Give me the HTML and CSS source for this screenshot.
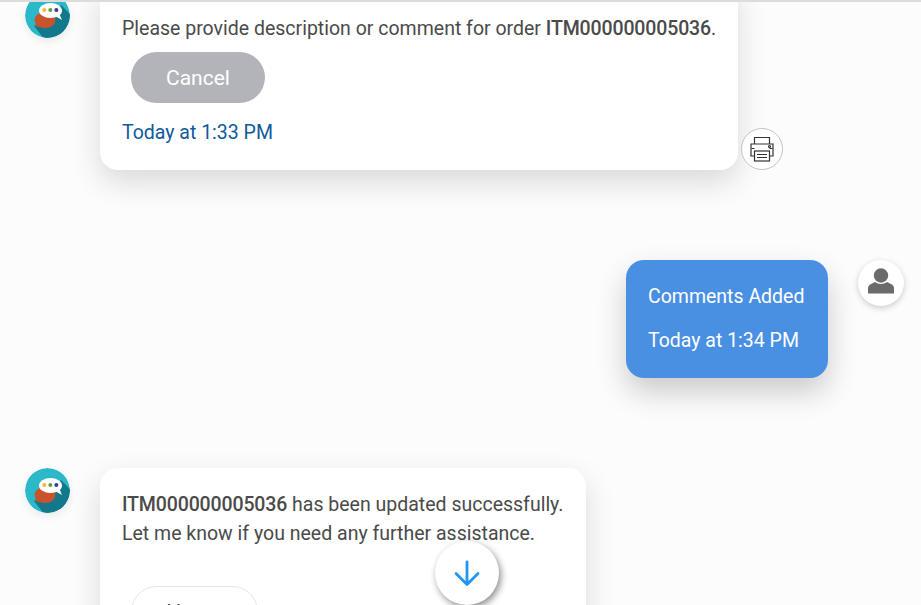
FILE: index.html
```html
<!DOCTYPE html>
<html lang="en">
<head>
<meta charset="utf-8">
<title>Chat</title>
<link rel="stylesheet" href="styles.css">
</head>
<body>
<div class="chat">
  <div class="row bot first">
    <svg class="avatar" viewBox="0 0 45 45"><defs><clipPath id="c1"><circle cx="22.500" cy="22.500" r="22.500"/></clipPath></defs><circle cx="22.500" cy="22.500" r="22.500" fill="#2bb9c9"/><path clip-path="url(#c1)" d="M36 12 L60 36 V60 H30 L9 33Z" fill="#14788c"/><ellipse cx="20" cy="27" rx="10.500" ry="8" fill="#c9532c"/><path d="M13 31 L9 33 L16 34Z" fill="#c9532c"/><ellipse cx="25.500" cy="17.500" rx="11.500" ry="7.500" fill="#fff"/><path d="M30 23 L37 27 L34 20Z" fill="#fff"/><circle cx="19.300" cy="17" r="2" fill="#f5b82e"/><circle cx="25.300" cy="17" r="2" fill="#5f9e3f"/><circle cx="31.300" cy="17" r="2" fill="#2f3f8f"/></svg>
    <div class="bubble white b1">
      <p class="text">Please provide description or comment for order <b>ITM000000005036</b>.</p>
      <button class="cancel">Cancel</button>
      <div class="time">Today at 1:33 PM</div>
    </div>
    <div class="print">
      <svg viewBox="0 0 24 26" width="24" height="26" fill="none" stroke="#333" stroke-width="1.200"><path d="M4.500 8V1.500h15V8"/><path d="M4.500 20H1V8h22v12h-3.500"/><rect x="4.500" y="15" width="15" height="10" fill="#fff"/><path d="M7 18.500h10M7 21.500h10M1.500 12.500h3M19.500 12.500h3"/><circle cx="19.500" cy="10.500" r="1"/></svg>
    </div>
  </div>
  <div class="row user">
    <div class="bubble blue">
      <div>Comments Added</div>
      <div class="usertime">Today at 1:34 PM</div>
    </div>
    <div class="user-avatar">
      <svg viewBox="0 0 26 26" width="26" height="26" fill="#6b6b6b"><circle cx="13" cy="7.500" r="7.200"/><path d="M0 25.500V20c0-2.500 2-3.500 4-4.500l3-1.500c3.500 2.500 8.500 2.500 12 0l3 1.500c2 1 4 2 4 4.500v5.500z"/></svg>
    </div>
  </div>
  <div class="row bot last">
    <svg class="avatar" viewBox="0 0 45 45"><defs><clipPath id="c2"><circle cx="22.500" cy="22.500" r="22.500"/></clipPath></defs><circle cx="22.500" cy="22.500" r="22.500" fill="#2bb9c9"/><path clip-path="url(#c2)" d="M36 12 L60 36 V60 H30 L9 33Z" fill="#14788c"/><ellipse cx="20" cy="27" rx="10.500" ry="8" fill="#c9532c"/><path d="M13 31 L9 33 L16 34Z" fill="#c9532c"/><ellipse cx="25.500" cy="17.500" rx="11.500" ry="7.500" fill="#fff"/><path d="M30 23 L37 27 L34 20Z" fill="#fff"/><circle cx="19.300" cy="17" r="2" fill="#f5b82e"/><circle cx="25.300" cy="17" r="2" fill="#5f9e3f"/><circle cx="31.300" cy="17" r="2" fill="#2f3f8f"/></svg>
    <div class="bubble white b2">
      <p class="text"><b>ITM000000005036</b> has been updated successfully.<br>Let me know if you need any further assistance.</p>
      <button class="option">Home</button>
    </div>
  </div>
</div>
<button class="scroll" aria-label="Scroll down">
  <svg viewBox="0 0 28 28" width="28" height="28" fill="none" stroke="#2196f3" stroke-width="2.800" stroke-linecap="round" stroke-linejoin="round"><path d="M14 3v22M3 14.500 14 25.500 25 14.500"/></svg>
</button>
</body>
</html>
```
FILE: styles.css
```css
html, body { margin: 0; height: 100%; overflow: hidden; }
body { background: #fcfcfc; font-family: Roboto, sans-serif; color: #4a4a4a; position: relative; border-top: 2px solid #dcdcdc; box-sizing: border-box; }
.chat { display: flex; flex-direction: column; margin-top: -22px; }
.row { display: flex; align-items: flex-start; }
.bot { padding-left: 25px; }
.avatar { width: 45px; height: 45px; flex: none; border-radius: 50%; box-shadow: 0 3px 8px rgba(0,0,0,.08); }
.first .avatar { margin-top: 13px; }
.bubble { border-radius: 18px; box-sizing: border-box; font-size: 19.500px; }
.white { background: #fff; margin-left: 30px; box-shadow: 0 12px 30px rgba(0,0,0,.14); }
.b1 { width: 638px; height: 190px; padding: 34px 22px 0; }
.text { margin: 0; line-height: 29px; white-space: nowrap; }
.text b { font-weight: 500; letter-spacing: -0.130px; }
.cancel { display: block; width: 134px; height: 51px; margin: 9px 0 0 9px; border: 0; border-radius: 26px; background: #b3b4ba; color: #fff; font: 21px Roboto, sans-serif; }
.time { margin-top: 15px; color: #0f5a9c; line-height: 29px; }
.print { width: 40px; height: 40px; border: 1px solid #c4c4c4; border-radius: 50%; background: #fff; display: flex; align-items: center; justify-content: center; margin: 148px 0 0 3px; }
.user { justify-content: flex-end; margin-top: 90px; padding-right: 17px; }
.blue { width: 202px; height: 118px; padding: 23px 22px 0; background: #4a90e2; color: #fff; box-shadow: 0 14px 30px rgba(0,0,0,.2); line-height: 28px; white-space: nowrap; }
.usertime { margin-top: 16px; }
.user-avatar { width: 46px; height: 46px; box-sizing: border-box; padding-bottom: 4px; border-radius: 50%; background: #fff; margin-left: 30px; display: flex; align-items: center; justify-content: center; box-shadow: 0 2px 6px rgba(0,0,0,.2); }
.last { margin-top: 90px; }
.b2 { width: 486px; height: 180px; padding: 22px; }
.option { display: block; width: 127px; height: 51px; margin: 38px 0 0 9px; border: 1px solid #e5e5e5; border-radius: 26px; background: #fff; color: #4a4a4a; font: 21px Roboto, sans-serif; }
.scroll { position: absolute; left: 435px; top: 539px; width: 64px; height: 64px; border: 0; border-radius: 50%; background: #fff; box-shadow: 2px 3px 7px rgba(0,0,0,.45); display: flex; align-items: center; justify-content: center; padding: 0; }
```
